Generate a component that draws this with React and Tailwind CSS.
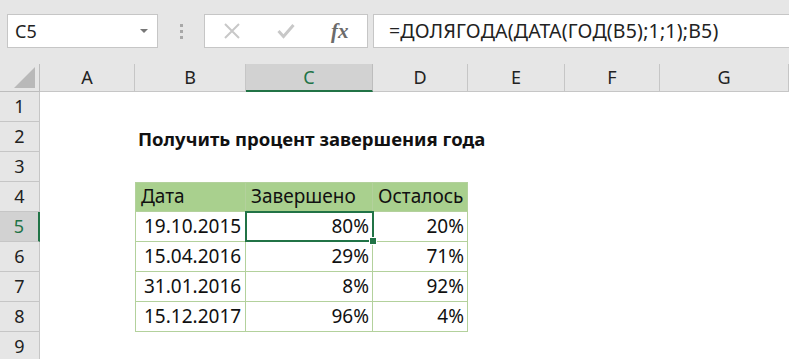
import React from "react";

const COLS = ["A", "B", "C", "D", "E", "F", "G"];

const rows = [
  { n: 1 },
  { n: 2, title: "Получить процент завершения года" },
  { n: 3 },
  { n: 4, head: ["Дата", "Завершено", "Осталось"] },
  { n: 5, data: ["19.10.2015", "80%", "20%"] },
  { n: 6, data: ["15.04.2016", "29%", "71%"] },
  { n: 7, data: ["31.01.2016", "8%", "92%"] },
  { n: 8, data: ["15.12.2017", "96%", "4%"] },
  { n: 9 },
];

const cellFont = { fontFamily: '"Noto Sans", "Open Sans", sans-serif' };
const uiFont = { fontFamily: '"Noto Sans", "Open Sans", sans-serif' };

function FormulaBar() {
  return (
    <div className="h-16 flex items-center bg-[#e6e6e6] pl-[7px] pb-[2px]" style={uiFont}>
      <div className="w-[151px] h-[34px] bg-white border border-[#c6c6c6] flex items-center justify-between pl-[7px] pr-[8px]">
        <span className="text-[18px] text-[#222]">C5</span>
        <svg width="10" height="6" viewBox="0 0 10 6">
          <path d="M1 1 L5 5 L9 1 Z" fill="#777" />
        </svg>
      </div>
      <div className="w-[46px] flex flex-col items-center gap-[3px]">
        <span className="w-[3px] h-[3px] bg-[#a8a8a8]" />
        <span className="w-[3px] h-[3px] bg-[#a8a8a8]" />
        <span className="w-[3px] h-[3px] bg-[#a8a8a8]" />
      </div>
      <div className="w-[164px] h-[34px] bg-white border border-[#c6c6c6] flex items-center">
        <svg className="ml-[18px]" width="18" height="18" viewBox="0 0 18 18">
          <path d="M2 2 L16 16 M16 2 L2 16" stroke="#c8c8c8" strokeWidth="2" />
        </svg>
        <svg className="ml-[36px]" width="18" height="16" viewBox="0 0 18 16">
          <path d="M1.5 8 L6.5 13.5 L16.5 2" stroke="#c8c8c8" strokeWidth="3" fill="none" />
        </svg>
        <span
          className="ml-[36px] text-[21px] italic font-bold text-[#6b6b6b] leading-none"
          style={{ fontFamily: '"Liberation Serif", serif' }}
        >
          fx
        </span>
      </div>
      <div className="flex-1 ml-[5px] h-[34px] bg-white border border-[#c6c6c6] border-r-0 flex items-center pl-[15px]">
        <span className="text-[19.5px] text-[#222] tracking-[0.2px]">=ДОЛЯГОДА(ДАТА(ГОД(B5);1;1);B5)</span>
      </div>
    </div>
  );
}

function Cell({ col, row }) {
  const inTable = row.n >= 4 && row.n <= 8 && ["B", "C", "D"].includes(col);
  const idx = ["B", "C", "D"].indexOf(col);
  const selected = row.n === 5 && col === "C";

  let cls = "relative h-[30px] flex items-end pb-[1px] text-[19px] text-[#111] whitespace-nowrap";
  if (inTable) {
    cls += " border-r border-b border-[#b3d19c]";
    if (col === "B") cls += " border-l";
    if (row.n === 4) cls += " border-t bg-[#a9d08e]";
  }
  if (selected) cls += " z-10";

  let content = null;
  if (row.title && col === "B") {
    content = (
      <span className="absolute left-[3px] -bottom-[1px] text-[18.5px] font-bold text-[#111]">
        {row.title}
      </span>
    );
  } else if (row.head && idx >= 0) {
    cls += " pl-[5px]";
    content = row.head[idx];
  } else if (row.data && idx >= 0) {
    cls += idx === 0 ? " pl-[8px]" : " justify-end pr-[3px]";
    content = row.data[idx];
  }

  return (
    <div className={cls} style={cellFont}>
      {content}
      {selected && (
        <div className="absolute -left-px -top-px -right-[2px] -bottom-px border-2 border-[#217346] pointer-events-none">
          <span className="absolute -right-[5px] -bottom-[5px] w-[8px] h-[8px] bg-[#217346] border border-white" />
        </div>
      )}
    </div>
  );
}

export default function App() {
  return (
    <div className="w-[789px] h-[359px] overflow-hidden bg-white">
      <FormulaBar />
      <div className="grid grid-cols-[40px_95px_111px_127px_95px_97px_95px_129px]" style={uiFont}>
        <div className="h-[28px] bg-[#e6e6e6] border-r border-b border-[#bdbdbd] relative">
          <svg className="absolute right-[4px] bottom-[3px]" width="21" height="21" viewBox="0 0 21 21">
            <path d="M21 0 L21 21 L0 21 Z" fill="#b9b9b9" />
          </svg>
        </div>
        {COLS.map((c) => (
          <div
            key={c}
            className={
              c === "C"
                ? "h-[28px] bg-[#d2d2d2] border-r border-[#bdbdbd] border-b-2 border-b-[#217346] flex items-center justify-center text-[18px] text-[#217346]"
                : "h-[28px] bg-[#e6e6e6] border-r border-b border-[#c6c6c6] flex items-center justify-center text-[18px] text-[#222]"
            }
          >
            {c}
          </div>
        ))}
        {rows.map((row) => (
          <React.Fragment key={row.n}>
            <div
              className={
                row.n === 5
                  ? "h-[30px] bg-[#d2d2d2] border-r-2 border-r-[#217346] border-b border-b-[#c6c6c6] flex items-center justify-center text-[18px] text-[#217346]"
                  : "h-[30px] bg-[#e6e6e6] border-r border-b border-[#c6c6c6] flex items-center justify-center text-[18px] text-[#222]"
              }
            >
              {row.n}
            </div>
            {COLS.map((c) => (
              <Cell key={c} col={c} row={row} />
            ))}
          </React.Fragment>
        ))}
      </div>
    </div>
  );
}
